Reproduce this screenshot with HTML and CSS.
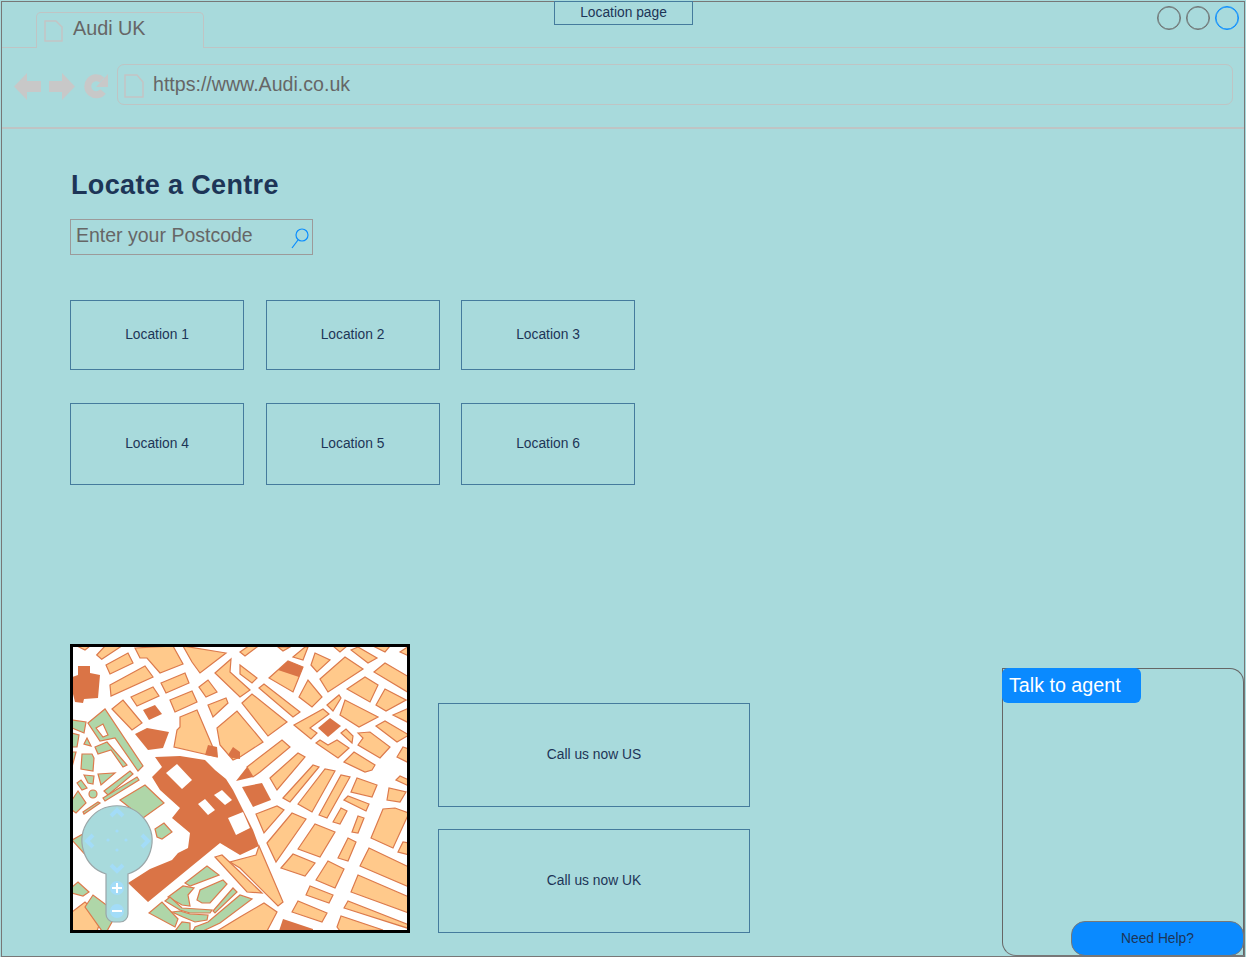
FILE: index.html
```html
<!DOCTYPE html>
<html lang="en">
<head>
<meta charset="utf-8">
<title>Audi UK</title>
<link rel="stylesheet" href="styles.css">
</head>
<body>
<div class="frame">
  <header class="titlebar">
    <div class="tab">
      <svg class="page-icon tab-icon" viewBox="0 0 19 22"><path d="M1 1H12L18 7V21H1Z"/></svg>
      <span>Audi UK</span>
    </div>
    <div class="page-label">Location page</div>
    <div class="win-buttons">
      <span class="win-btn"></span><span class="win-btn"></span><span class="win-btn active"></span>
    </div>
  </header>
  <nav class="toolbar">
    <div class="nav-icons">
      <svg width="27" height="27" viewBox="0 0 27 27"><path class="nav-shape" d="M0 13.5L13 0V8H27V19H13V27Z"/></svg>
      <svg width="26" height="27" viewBox="0 0 26 27"><path class="nav-shape" d="M26 13.5L13 0V8H0V19H13V27Z"/></svg>
      <svg class="reload" width="24" height="26" viewBox="0 0 24 26"><path class="nav-ring" d="M19 18.5A8.5 8.5 0 1 1 18 7"/><path class="nav-shape" d="M24 1V14H12Z"/></svg>
    </div>
    <div class="address">
      <svg class="page-icon addr-icon" viewBox="0 0 20 24"><path d="M1 1H13L19 8V23H1Z"/></svg>
      <span>https://www.Audi.co.uk</span>
    </div>
  </nav>
  <main class="content">
    <h1 class="heading">Locate a Centre</h1>
    <div class="search">
      <span>Enter your Postcode</span>
      <svg class="search-icon" width="18" height="22" viewBox="0 0 18 22"><circle cx="11" cy="8" r="6"/><path d="M7 13L1 21"/></svg>
    </div>
    <section class="locations">
      <div class="box">Location 1</div>
      <div class="box">Location 2</div>
      <div class="box">Location 3</div>
      <div class="box">Location 4</div>
      <div class="box">Location 5</div>
      <div class="box">Location 6</div>
    </section>
    <section class="bottom">
      <div class="map">
        <svg class="map-svg" viewBox="73 647 334 283" width="334" height="283">
          <g class="peach">
            <polygon points="96.7,655 105,646 121.7,646 101.7,659.3"/>
            <polygon points="106,665 128,653 133,663 110,674"/>
            <polygon points="135,648 173,646 183,664 160,673 147,658 140,658"/>
            <polygon points="110,685 145,666 153,677 111,696"/>
            <polygon points="161,683 185,673 189,683 166,693"/>
            <polygon points="131,697 153,687 159,696 137,706"/>
            <polygon points="170,700 192,691 197,702 175,712"/>
            <polygon points="112,709 123,700 142,723 132,730"/>
            <polygon points="180,717 197,710 217,757 174,747 177,730 180,727"/>
            <polygon points="183,646 226,653 200,673 192,662"/>
            <polygon points="199,687 208,680 217,692 206,697"/>
            <polygon points="208,705 226,698 228,703 213,717"/>
            <polygon points="215,673 231,659 230,672 250,690 240,697"/>
            <polygon points="217,728 237,711 263,742 240,757 233,760 220,745"/>
            <polygon points="240,652 250,645 257,647 245,656"/>
            <polygon points="293,657 305,647 308,647 303,660"/>
            <polygon points="311,665 315,653 330,660 317,672"/>
            <polygon points="320,679 345,657 363,669 328,692"/>
            <polygon points="351,650 358,647 377,658 368,663"/>
            <polygon points="374,672 385,663 409,677 409,693"/>
            <polygon points="269,678 288,661 303,667 293,692"/>
            <polygon points="240,665 257,678 252,683 240,674"/>
            <polygon points="259,688 264,684 300,712 293,717"/>
            <polygon points="299,697 308,680 322,697 312,707"/>
            <polygon points="347,689 365,677 378,685 370,702"/>
            <polygon points="376,705 385,689 406,700 386,711"/>
            <polygon points="327,705 339,695 341,698 333,711"/>
            <polygon points="340,715 345,700 378,717 359,727"/>
            <polygon points="242,703 252,694 287,722 268,736"/>
            <polygon points="294,725 323,709 329,714 310,728 317,733 311,739"/>
            <polygon points="341,733 346,729 353,736 352,743"/>
            <polygon points="358,733 370,732 390,747 380,758 358,745 363,738"/>
            <polygon points="376,726 385,721 409,735 397,742"/>
            <polygon points="393,715 409,708 409,723"/>
            <polygon points="316,743 320,740 328,745 337,740 349,748 338,758"/>
            <polygon points="344,762 354,752 375,765 372,770 365,772"/>
            <polygon points="397,757 403,747 409,749 409,763"/>
            <polygon points="396,780 400,776 409,780 409,786"/>
            <polygon points="247,767 282,740 290,747 260,772 253,777"/>
            <polygon points="270,778 298,753 305,757 277,790"/>
            <polygon points="283,798 313,765 319,767 290,802"/>
            <polygon points="298,804 325,769 335,771 312,812"/>
            <polygon points="319,815 341,775 350,777 327,818"/>
            <polygon points="351,792 357,778 377,785 372,797"/>
            <polygon points="344,800 348,796 369,804 366,811"/>
            <polygon points="333,822 341,808 347,811 340,824"/>
            <polygon points="352,832 358,816 364,818 358,833"/>
            <polygon points="371,838 383,809 395,808 409,813 393,848"/>
            <polygon points="387,800 389,788 406,792 400,802"/>
            <polygon points="398,852 403,842 409,843 409,855"/>
            <polygon points="256,814 277,806 284,810 264,833"/>
            <polygon points="267,843 292,813 306,819 276,862"/>
            <polygon points="298,849 315,824 335,832 320,857"/>
            <polygon points="281,868 293,854 315,863 305,876"/>
            <polygon points="338,858 348,838 356,842 348,861"/>
            <polygon points="316,880 328,861 344,869 335,888"/>
            <polygon points="360,866 369,848 409,867 409,887"/>
            <polygon points="351,892 358,875 409,897 409,913"/>
            <polygon points="344,908 348,901 409,925 407,928"/>
            <polygon points="337,927 341,916 383,930 340,931"/>
            <polygon points="306,895 310,886 333,895 329,903"/>
            <polygon points="292,912 298,901 327,913 322,922"/>
            <polygon points="256,855 259,846 283,902 278,906 240,868 230,862"/>
            <polygon points="215,857 222,855 240,872 262,893 247,892"/>
            <polygon points="217,931 240,917 264,903 277,912 267,931"/>
            <polygon points="72,912 85,902 102,917 97,931 72,931"/>
            <polygon points="278,647 290,647 283,651"/>
            <polygon points="333,646 347,646 340,652"/>
            <polygon points="373,646 390,646 385,652"/>
            <polygon points="400,652 409,646 409,656"/>
            <polygon points="77,646 90,646 85,650"/>
          </g>
          <g class="green">
            <polygon points="72,720 86,722 84,733 72,728"/>
            <polygon points="72,733 79,735 77,747 72,747"/>
            <polygon points="72,752 76,752 72,767"/>
            <polygon points="84,744 87,738 91,746"/>
            <polygon points="82,754 92,754 94,758 93,771 81,769"/>
            <polygon points="84,775 94,776 93,784 88,783"/>
            <polygon points="98,774 115,773 101,785"/>
            <polygon points="77,783 81,780 87,788 82,790"/>
            <circle cx="93" cy="794" r="4"/>
            <polygon points="104,791 130,771 133,774 108,795"/>
            <polygon points="103,798 137,777 139,780 105,801"/>
            <path class="loop" d="M88 723L105 709L143 766L138 771L115 738L100 741ZM96 728L103 724L108 735L103 737Z"/>
            <polygon points="95,747 107,742 127,765 123,767 111,750 98,754"/>
            <polygon points="155,829 164,823 172,832 162,839 157,837"/>
            <polygon points="120,800 145,785 164,803 143,818"/>
            <polygon points="72,800 78,791 86,803 76,813 72,810"/>
            <polygon points="83,812 98,802 100,803 84,814"/>
            <polygon points="72,840 90,830 100,855 90,860"/>
            <polygon points="72,887 78,882 89,892 83,896 72,893"/>
            <polygon points="85,907 93,895 117,913 107,931 102,931"/>
            <polygon points="149,913 162,902 178,919 175,927"/>
            <polygon points="168,897 183,886 194,888 188,895 190,906 182,905"/>
            <polygon points="185,883 207,866 219,875 190,886"/>
            <polygon points="197,900 200,890 223,880 227,884 210,903 202,903"/>
            <polygon points="213,911 233,888 237,892 215,913"/>
            <polygon points="165,901 170,897 182,908 212,910 210,913 190,913 180,910"/>
            <polygon points="172,912 180,911 190,914 208,915 207,920 195,922 183,917"/>
            <polygon points="175,931 182,922 190,923 190,931"/>
            <polygon points="193,931 195,927 208,922 240,895 252,899 220,923 203,931"/>
          </g>
          <g class="dark">
            <polygon points="72,677 78,675 78,666 90,666 90,673 100,675 98,698 84,699 83,703 75,702 72,690"/>
            <polygon points="143,710 155,705 162,714 149,720"/>
            <polygon points="135,734 147,728 169,732 163,748 148,750"/>
            <polygon points="205,755 208,745 217,747 218,757"/>
            <polygon points="228,755 233,747 240,752 240,759 232,758"/>
            <polygon points="278,670 288,661 303,667 299,677"/>
            <polygon points="318,728 330,718 341,726 328,737"/>
            <polygon points="247,767 253,777 236,781"/>
            <polygon points="242,787 262,783 271,800 253,807"/>
            <polygon points="279,931 283,919 313,929 313,931"/>
            <polygon points="155,757 180,756 205,760 215,770 226,779 233,790 243,810 253,830 259,846 240,855 220,843 148,902 128,883 150,869 172,860 178,853 188,848 190,833 172,818 180,808 160,790 152,777 162,767"/>
          </g>
          <g class="holes">
            <polygon points="166,773 177,764 192,780 182,789"/>
            <polygon points="198,804 205,799 215,810 208,815"/>
            <polygon points="214,795 222,790 232,800 225,805"/>
            <polygon points="228,818 243,812 250,828 236,835"/>
          </g>
          <path class="ctrl" d="M106 874A35 35 0 1 1 128 874V914A8 8 0 0 1 120 922H114A8 8 0 0 1 106 914Z"/>
          <g class="ctrl-arrows">
            <path d="M111 816L117 810L123 816"/>
            <path d="M111 865L117 871L123 865"/>
            <path d="M93 835L87 841L93 847"/>
            <path d="M142 835L148 841L142 847"/>
          </g>
          <g class="ctrl-dots">
            <circle cx="117" cy="831" r="1.6"/><circle cx="117" cy="850" r="1.6"/><circle cx="108" cy="840" r="1.6"/><circle cx="126" cy="840" r="1.6"/>
          </g>
          <circle class="zoom-dot" cx="117" cy="888" r="7"/>
          <circle class="zoom-dot" cx="117" cy="911" r="7"/>
          <path class="zoom-sign" d="M112 888H122M117 883V893M112 911H122"/>
        </svg>
      </div>
      <div class="calls">
        <div class="box call">Call us now US</div>
        <div class="box call">Call us now UK</div>
      </div>
      <aside class="chat">
        <div class="chat-head">Talk to agent</div>
        <div class="chat-help">Need Help?</div>
      </aside>
    </section>
  </main>
</div>
</body>
</html>
```
FILE: styles.css
```css
* { box-sizing: border-box; }
html, body { margin: 0; padding: 0; }
body {
  width: 1246px;
  height: 957px;
  padding: 1px 1px 0;
  overflow: hidden;
  background: #a8dadc;
  font-family: "Liberation Sans", Arial, sans-serif;
  color: #1d3557;
}
.frame {
  width: 1244px;
  height: 956px;
  border: 1px solid #777;
  display: flex;
  flex-direction: column;
}
.titlebar {
  height: 46px;
  flex: none;
  display: flex;
  align-items: flex-start;
  border-bottom: 1px solid #bfc4c4;
  padding-left: 34px;
}
.tab {
  width: 168px;
  height: 36px;
  margin-top: 10px;
  border: 1px solid #c0c4c4;
  border-bottom: 0;
  border-radius: 5px 5px 0 0;
  display: flex;
  align-items: center;
  padding: 0 0 4px 7px;
  gap: 10px;
  margin-bottom: -1px;
  background: #a8dadc;
  font-size: 19.8px;
  color: #666;
}
.page-icon path { fill: none; stroke: #c4c4c4; stroke-width: 1.5; }
.tab-icon { width: 19px; height: 22px; margin-top: 5px; }
.page-label {
  width: 139px;
  height: 24px;
  margin-left: 350px;
  margin-top: -1px;
  border: 1px solid #457b9d;
  font-size: 13.8px;
  text-align: center;
  line-height: 21px;
}
.win-buttons {
  margin-left: auto;
  margin-top: 4px;
  margin-right: 5px;
  display: flex;
  gap: 5px;
}
.win-btn {
  width: 24px;
  height: 24px;
  border: 1px solid #6f7474;
  box-shadow: inset 0 0 0 0.5px #6f7474;
  border-radius: 50%;
}
.win-btn.active { border-color: #0a8dff; box-shadow: inset 0 0 0 0.5px #0a8dff; }
.toolbar {
  height: 81px;
  flex: none;
  display: flex;
  align-items: flex-start;
  border-bottom: 2px solid #bfc4c4;
  padding: 16px 11px 0 12px;
}
.nav-icons {
  width: 103px;
  padding-top: 9px;
  display: flex;
  gap: 8px;
}
.reload { margin-left: 1px; }
.nav-shape { fill: #c8c8c8; }
.nav-ring { fill: none; stroke: #c8c8c8; stroke-width: 7; }
.address {
  flex: 1;
  height: 41px;
  border: 1px solid #bfc4c4;
  border-radius: 7px;
  display: flex;
  align-items: center;
  padding-left: 6px;
  gap: 9px;
  font-size: 19.6px;
  color: #666;
}
.addr-icon { width: 20px; height: 24px; margin-top: 3px; }
.address span { margin-top: -1px; }
.content {
  flex: 1;
  display: flex;
  flex-direction: column;
  padding-left: 68px;
  min-height: 0;
}
.heading {
  margin: 40px 0 0 1px;
  font-size: 27px;
  line-height: 33px;
  font-weight: bold;
  letter-spacing: 0.35px;
}
.search {
  margin-top: 17px;
  width: 243px;
  height: 36px;
  border: 1px solid #9c9a9a;
  display: flex;
  align-items: center;
  justify-content: space-between;
  padding: 0 3px 3px 5px;
  font-size: 19.5px;
  color: #666;
}
.search-icon { margin-top: 5px; }
.search-icon circle, .search-icon path { fill: none; stroke: #0a8dff; stroke-width: 1.2; }
.locations {
  margin-top: 45px;
  display: grid;
  grid-template-columns: repeat(3, 174px);
  grid-template-rows: 70px 82px;
  column-gap: 21.5px;
  row-gap: 33px;
  width: 565px;
}
.box {
  border: 1px solid #457b9d;
  display: flex;
  align-items: center;
  justify-content: center;
  padding-bottom: 1px;
  font-size: 13.8px;
}
.bottom {
  margin-top: auto;
  display: flex;
  align-items: flex-end;
}
.map {
  width: 340px;
  height: 289px;
  border: 3px solid #000;
  background: #fff;
  margin-bottom: 23px;
  flex: none;
}
.map-svg { display: block; }
.peach polygon { fill: #ffc98b; stroke: #dc7a4c; stroke-width: 1.2; }
.green polygon, .green circle, .green .loop { fill: #afd6a8; stroke: #dc7a4c; stroke-width: 1.2; fill-rule: evenodd; }
.dark polygon { fill: #da7446; }
.holes polygon { fill: #fff; }
.ctrl { fill: #a8dadc; stroke: #9aa6a8; stroke-width: 1.2; }
.ctrl-arrows path { fill: none; stroke: #a3dcf8; stroke-width: 4; }
.ctrl-dots circle { fill: #a3dcf8; }
.zoom-dot { fill: #a3dcf8; }
.zoom-sign { fill: none; stroke: #fff; stroke-width: 2; }
.calls {
  margin-left: 28px;
  margin-bottom: 23px;
  width: 312px;
  display: flex;
  flex-direction: column;
  gap: 22px;
  flex: none;
}
.call { height: 104px; }
.chat {
  margin-left: auto;
  width: 242px;
  height: 288px;
  border: 1px solid #666;
  border-bottom-color: #777;
  border-radius: 0 14px 0 14px;
  display: flex;
  flex-direction: column;
  justify-content: space-between;
  align-items: flex-start;
}
.chat-head {
  width: 139px;
  height: 35px;
  margin: -1px 0 0 -1px;
  background: #0a8aff;
  border-radius: 6px;
  color: #fff;
  font-size: 19.7px;
  line-height: 35px;
  padding-left: 7px;
}
.chat-help {
  align-self: flex-end;
  width: 173px;
  height: 35px;
  margin: 0 -1px -1px 0;
  background: #0a8aff;
  border: 1px solid #777;
  border-radius: 14px;
  font-size: 13.8px;
  line-height: 33px;
  text-align: center;
}
```
